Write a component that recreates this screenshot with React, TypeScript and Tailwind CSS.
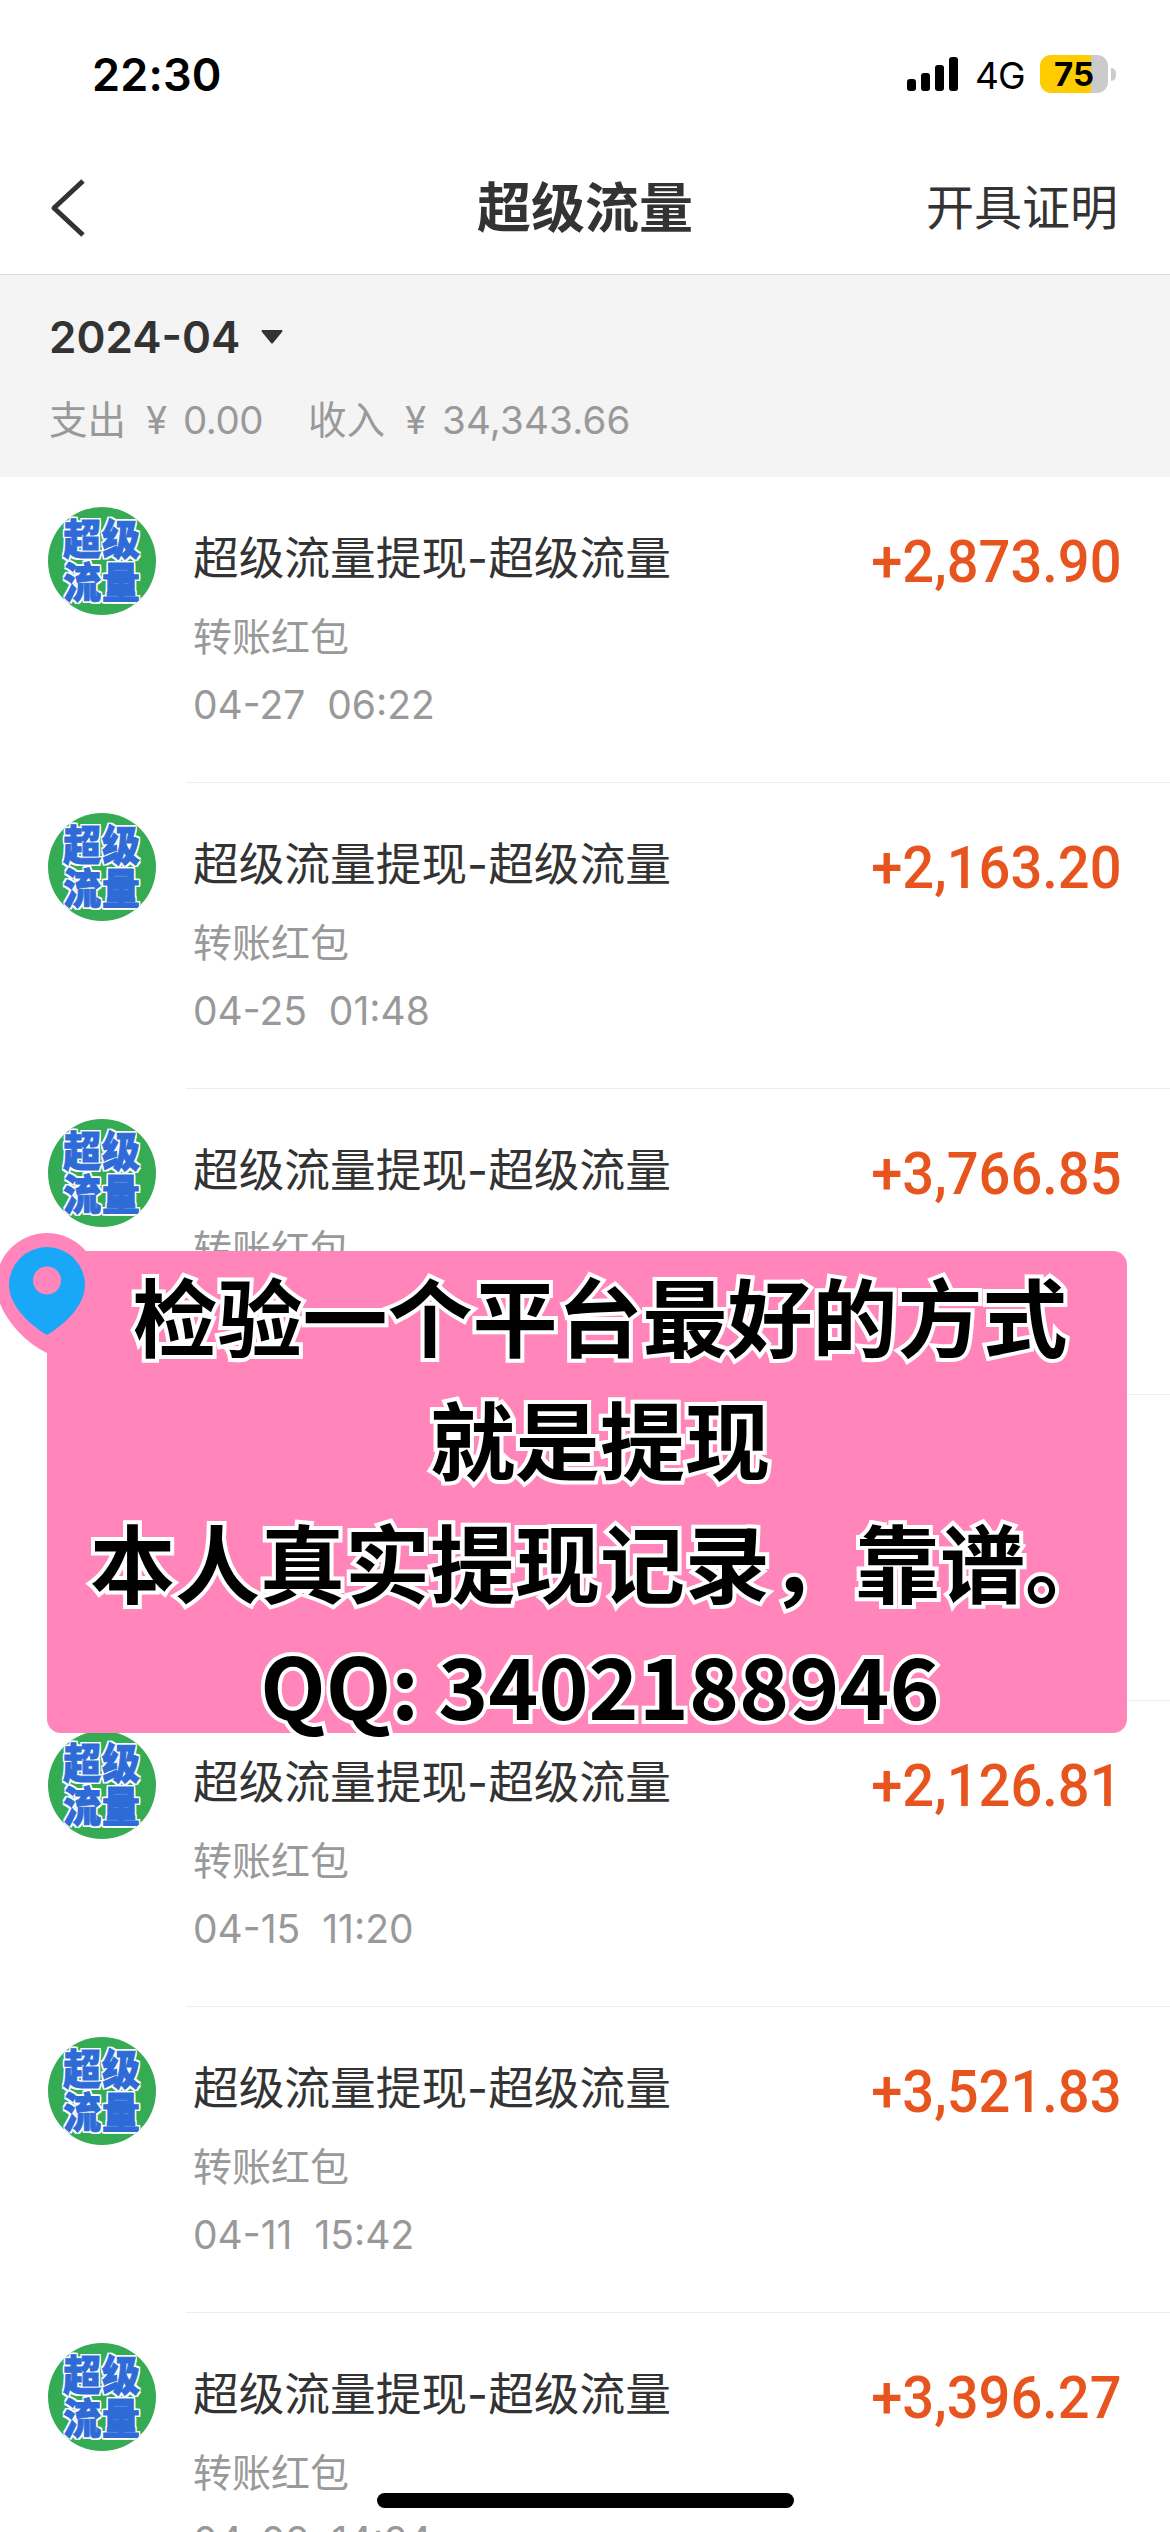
import React from 'react'

interface Bill {
  id: number
  amount: string
  time: string
}

const bills: Bill[] = [
  { id: 1, amount: '+2,873.90', time: '04-27  06:22' },
  { id: 2, amount: '+2,163.20', time: '04-25  01:48' },
  { id: 3, amount: '+3,766.85', time: '' },
  { id: 4, amount: '', time: '' },
  { id: 5, amount: '+2,126.81', time: '04-15  11:20' },
  { id: 6, amount: '+3,521.83', time: '04-11  15:42' },
  { id: 7, amount: '+3,396.27', time: '04-08  14:24' },
]

const StatusBar = () => (
  <div className="flex h-[144px] shrink-0 items-start justify-between pl-[92px] pr-[54px] pt-[54px] text-black">
    <span className="text-[45px] font-semibold leading-[42px] tracking-[0.2px]">22:30</span>
    <div className="flex h-[40px] items-center">
      <svg width="52" height="34" viewBox="0 0 52 34" className="mr-[16px]">
        <rect x="0" y="22" width="9" height="12" rx="3" />
        <rect x="14" y="16" width="9" height="18" rx="3" />
        <rect x="28" y="8" width="9" height="26" rx="3" />
        <rect x="42" y="0" width="9" height="34" rx="3" />
      </svg>
      <span className="w-[65px] pt-[3px] text-[37px] leading-[40px] tracking-[-1px]">4G</span>
      <div className="flex h-[38px] w-[68px] items-center justify-center rounded-[11px] bg-[linear-gradient(90deg,#ffcc00_75%,#cbcbcb_75%)]">
        <span className="text-[33px] font-bold leading-[38px]">75</span>
      </div>
      <div className="ml-[3px] h-[13px] w-[5px] rounded-r-full bg-[#cbcbcb]" />
    </div>
  </div>
)

const Header = () => (
  <div className="grid h-[131px] shrink-0 grid-cols-3 items-center border-b border-[#dcdcdc] pb-[3px] text-[#333333]">
    <svg width="36" height="58" viewBox="0 0 36 58" fill="none" stroke="#333333" strokeWidth="5" className="ml-[50px]">
      <path d="M33 2 L4 29 L33 56" strokeLinejoin="round" />
    </svg>
    <h1 className="pt-[2px] text-center text-[54px] font-bold leading-[60px]">超级流量</h1>
    <span className="pr-[52px] text-right text-[48px] leading-[60px]">开具证明</span>
  </div>
)

const Summary = () => (
  <div className="flex h-[202px] shrink-0 flex-col bg-[#f4f4f4] pl-[49px] pt-[34px]">
    <div className="flex h-[56px] items-center">
      <span className="text-[44px] font-semibold text-[#333333]">2024-04</span>
      <svg width="22" height="14" viewBox="0 0 22 14" fill="#333333" className="ml-[21px]">
        <path d="M1 0 H21 Q22 1 21 2 L12 13 Q11 14 10 13 L1 2 Q0 1 1 0 Z" />
      </svg>
    </div>
    <div className="mt-[28px] flex h-[56px] items-center text-[38.5px] text-[#999999]">
      <span className="w-[97px]">支出</span>
      <span className="w-[37px]">¥</span>
      <span className="w-[125px] tracking-[-0.5px]">0.00</span>
      <span className="w-[97px]">收入</span>
      <span className="w-[37px]">¥</span>
      <span className="tracking-[0.2px]">34,343.66</span>
    </div>
  </div>
)

const Avatar = () => (
  <div className="flex h-[108px] w-[108px] shrink-0 items-center justify-center overflow-hidden rounded-full bg-[#35ab54]">
    <div className="scale-x-90 whitespace-nowrap pb-px text-center text-[42px] font-black leading-[43px] tracking-[1px] text-[#2e6bd6] [-webkit-text-stroke:1px_#2e6bd6] [text-shadow:2px_0_#fff,-2px_0_#fff,0_2px_#fff,0_-2px_#fff,2px_2px_#fff,-2px_2px_#fff,2px_-2px_#fff,-2px_-2px_#fff]">
      <div>超级</div>
      <div>流量</div>
    </div>
  </div>
)

const BillRow = ({ bill }: { bill: Bill }) => (
  <div className="flex h-[306px] shrink-0 pl-[48px]">
    <div className="pt-[30px]">
      <Avatar />
    </div>
    <div className="ml-[30px] flex flex-1 justify-between border-b border-[#eeeeee] pl-[7px] pr-[48px] pt-[52px]">
      <div>
        <p className="text-[45.7px] leading-[60px] text-[#333333]">超级流量提现-超级流量</p>
        <p className="mt-[18px] text-[39px] leading-[60px] text-[#999999]">转账红包</p>
        <p className="mt-[8px] whitespace-pre text-[39px] leading-[60px] text-[#999999]">{bill.time}</p>
      </div>
      <span className="mt-px origin-right scale-x-95 font-[Roboto] text-[59px] font-medium leading-[64px] text-[#e8541e]">
        {bill.amount}
      </span>
    </div>
  </div>
)

const Notice = () => (
  <div className="absolute left-[47px] top-[1251px] h-[482px] w-[1080px] rounded-[14px] rounded-tl-none bg-[#ff85bb]">
    <svg width="104" height="124" viewBox="0 0 104 124" className="absolute left-[-52px] top-[-19px]">
      <path d="M52 121 C28 110 1 80 1 52 A51 51 0 0 1 103 52 C103 80 76 110 52 121 Z" fill="#ff85bb" />
      <path
        d="M52 103 C32 91 14 72 14 53 A38 38 0 0 1 90 53 C90 72 72 91 52 103 Z M52 34.5 A14 14 0 1 0 52 62.5 A14 14 0 1 0 52 34.5 Z"
        fill="#18a8f7"
        fillRule="evenodd"
      />
    </svg>
    <div className="relative whitespace-nowrap pl-[26px] pt-px text-center font-['Noto_Sans_CJK_SC',sans-serif] text-[85px] font-bold leading-[123px] text-black [-webkit-text-stroke:8px_#fff] [paint-order:stroke_fill]">
      <p>检验一个平台最好的方式</p>
      <p>就是提现</p>
      <p>本人真实提现记录，靠谱。</p>
      <p>QQ: 3402188946</p>
    </div>
  </div>
)

const App = () => {
  return (
    <div className="relative flex h-[2532px] w-[1170px] flex-col overflow-hidden bg-white font-[Inter,'Noto_Sans_CJK_SC',sans-serif]">
      <StatusBar />
      <Header />
      <Summary />
      {bills.map((bill) => (
        <BillRow key={bill.id} bill={bill} />
      ))}
      <Notice />
      <div className="absolute bottom-[24px] left-[377px] h-[15px] w-[417px] rounded-full bg-black" />
    </div>
  )
}

export default App
